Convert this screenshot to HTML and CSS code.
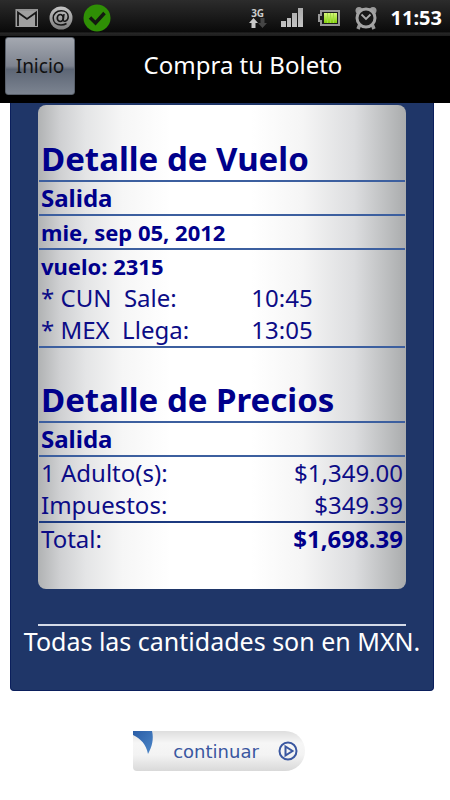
FILE: index.html
```html
<!DOCTYPE html>
<html lang="es">
<head>
  <meta charset="UTF-8">
  <meta name="viewport" content="width=device-width, initial-scale=1.0">
  <title>Compra tu Boleto</title>
  <link rel="stylesheet" href="styles.css">
</head>
<body>
  <div class="status-bar">
    <div class="status-left">
      <svg width="24" height="20" viewBox="0 0 24 20">
        <rect x="0.500" y="1" width="22.500" height="18" fill="#a0a0a0"/>
        <path d="M3 18V4.500l9 6.500 9-6.500V18" fill="none" stroke="#161616" stroke-width="1.800"/>
        <path d="M1 2h22" stroke="#8a8a8a" stroke-width="1"/>
      </svg>
      <svg width="24" height="24" viewBox="0 0 24 24">
        <defs>
          <linearGradient id="ball" x1="0" y1="0" x2="0" y2="1">
            <stop offset="0" stop-color="#c4c4c4"/>
            <stop offset="1" stop-color="#7d7d7d"/>
          </linearGradient>
        </defs>
        <circle cx="12" cy="12" r="11.500" fill="url(#ball)"/>
        <ellipse cx="11.300" cy="12" rx="3" ry="3.500" fill="none" stroke="#161616" stroke-width="1.700"/>
        <path d="M15 8l-.8 6c0 2.300 5 1.500 5-3.200 0-3.800-3-6-7-6-4.700 0-8 3-8 7.200s3.200 7 7.800 7c2.200 0 3.800-.4 5.500-1.500" fill="none" stroke="#161616" stroke-width="1.500"/>
      </svg>
      <svg width="28" height="28" viewBox="0 0 28 28">
        <circle cx="14" cy="14" r="13.500" fill="#2f8f05"/>
        <path d="M7 13.500l5.500 5.500 9-10" fill="none" stroke="#131a10" stroke-width="3.500"/>
      </svg>
    </div>
    <div class="status-right">
      <div class="network">
        <span>3G</span>
        <svg width="18" height="10" viewBox="0 0 18 10">
          <path d="M4.500 0l4.500 5H6.500v5h-4V5H0z" fill="#c8c8c8"/>
          <path d="M13.500 10l4.500-5h-2.500V0h-4v5H9z" fill="#454545"/>
        </svg>
      </div>
      <svg width="24" height="20" viewBox="0 0 24 20">
        <defs>
          <linearGradient id="bars" x1="0" y1="0" x2="0" y2="1">
            <stop offset="0" stop-color="#aaa"/>
            <stop offset="1" stop-color="#c4c4c4"/>
          </linearGradient>
        </defs>
        <path d="M1 13h5v6H1zM7 10h4v9H7zM12 5h5v14h-5zM18 0h5v19h-5z" fill="url(#bars)"/>
      </svg>
      <svg width="24" height="18" viewBox="0 0 24 18">
        <defs>
          <linearGradient id="charge" x1="0" y1="0" x2="0" y2="1">
            <stop offset="0" stop-color="#d9f77e"/>
            <stop offset="1" stop-color="#80d00a"/>
          </linearGradient>
        </defs>
        <path d="M4 2h18v14H4v-4H2V6h2z" fill="#1c1c1c" stroke="#999" stroke-width="2"/>
        <rect x="7" y="4" width="13" height="10" fill="url(#charge)"/>
        <path d="M10.500 4v10M13.500 4v10M16.500 4v10" stroke="#a4dc46" stroke-width="1"/>
      </svg>
      <svg width="24" height="24" viewBox="0 0 24 24">
        <circle cx="5" cy="4.500" r="3.500" fill="#999"/>
        <circle cx="19" cy="4.500" r="3.500" fill="#999"/>
        <path d="M6 18l-2 5M18 18l2 5" stroke="#999" stroke-width="3.500"/>
        <circle cx="12" cy="12" r="9" fill="#181818" stroke="#a4a4a4" stroke-width="3"/>
        <path d="M7.500 8.500l4.500 4.500 4.500-4.500" fill="none" stroke="#aaa" stroke-width="1.800"/>
      </svg>
      <span class="clock">11:53</span>
    </div>
  </div>

  <header class="nav-bar">
    <button class="home-button" type="button">Inicio</button>
    <h1>Compra tu Boleto</h1>
  </header>

  <main>
    <div class="panel">
      <div class="card">
        <section>
          <h2>Detalle de Vuelo</h2>
          <h3>Salida</h3>
          <h4>mie, sep 05, 2012</h4>
          <div class="group">
            <h4 class="plain">vuelo: 2315</h4>
            <table class="flight">
              <tr><th scope="row">* CUN&nbsp; Sale:</th><td>10:45</td></tr>
              <tr><th scope="row">* MEX&nbsp; Llega:</th><td>13:05</td></tr>
            </table>
          </div>
        </section>
        <section>
          <h2>Detalle de Precios</h2>
          <h3>Salida</h3>
          <table class="prices">
            <tbody>
              <tr><th scope="row">1 Adulto(s):</th><td>$1,349.00</td></tr>
              <tr><th scope="row">Impuestos:</th><td>$349.39</td></tr>
            </tbody>
            <tfoot>
              <tr><th scope="row">Total:</th><td>$1,698.39</td></tr>
            </tfoot>
          </table>
        </section>
      </div>
      <p class="note">Todas las cantidades son en MXN.</p>
    </div>

    <div class="actions">
      <button class="continue-button" type="button">
        <svg class="corner" width="21" height="24" viewBox="0 0 21 24">
          <defs>
            <linearGradient id="fold" x1="0" y1="0" x2="1" y2="1">
              <stop offset="0" stop-color="#2a5da6"/>
              <stop offset="1" stop-color="#4c86c8"/>
            </linearGradient>
          </defs>
          <path d="M0 0h19c2 8 0 16-4 23C13 13 8 8 0 4z" fill="url(#fold)"/>
        </svg>
        <span>continuar</span>
        <svg width="20" height="20" viewBox="0 0 20 20">
          <circle cx="10" cy="10" r="8.500" fill="none" stroke="#3a57a0" stroke-width="2"/>
          <path d="M7.500 5.500v9l7-4.500z" fill="none" stroke="#3a57a0" stroke-width="2"/>
        </svg>
      </button>
    </div>
  </main>
</body>
</html>
```
FILE: styles.css
```css
* {
  margin: 0;
  padding: 0;
  box-sizing: border-box;
}

body {
  font-family: 'Noto Sans', 'Open Sans', sans-serif;
  font-size: 25px;
  line-height: 32px;
  background: white;
  color: #0c0c86;
}

svg {
  display: block;
  flex-shrink: 0;
}

button {
  font-family: inherit;
  cursor: pointer;
}

.status-bar {
  display: flex;
  align-items: center;
  justify-content: space-between;
  height: 36px;
  padding: 0 8px 0 15px;
  background: linear-gradient(#2c2c2c, #0a0a0a 88%, #262626 92%, #1c1c1c);
}

.status-left {
  display: flex;
  align-items: center;
  gap: 10px;
}

.status-right {
  display: flex;
  align-items: center;
  gap: 13px;
}

.network {
  display: flex;
  flex-direction: column;
  align-items: center;
  color: #ccc;
  font-size: 10px;
  font-weight: 700;
  line-height: 10px;
}

.clock {
  color: white;
  font-size: 20px;
  font-weight: 700;
}

.nav-bar {
  display: grid;
  grid-template-columns: 70px 1fr 34px;
  align-items: start;
  height: 67px;
  padding: 1px 5px;
  background: black;
}

.nav-bar h1 {
  padding-top: 12px;
  color: white;
  font-size: 24px;
  font-weight: 400;
  text-align: center;
}

.home-button {
  height: 58px;
  border: 1px solid #59606b;
  border-radius: 3px;
  background: linear-gradient(#a4a8b0, #7d838f 50%, #5d6675 56%, #7c8491);
  color: #111;
  font-size: 19px;
}

.panel {
  margin: 0 16px 0 10px;
  padding: 2px 0 34px;
  border: 1px solid #0b1f5c;
  border-top: 0;
  border-radius: 0 0 4px 4px;
  background: #1f3668;
}

.card {
  margin: 0 27px;
  padding: 2px 1px 34px;
  border-radius: 8px;
  background: linear-gradient(90deg, #b0b2b3, #cfd0d2 6%, #e4e5e6 13%, #f6f6f6 23%, white 36%, white 58%, #f5f5f5 72%, #dcdddf 86%, #aaacad);
}

.card h2 {
  padding: 30px 2px 0;
  border-bottom: 2px solid #3c5f9f;
  font-size: 33px;
  line-height: 43px;
  color: #00008b;
}

.card h3,
.card h4 {
  padding: 0 2px;
  border-bottom: 2px solid #3c5f9f;
  color: #00008b;
}

.card h3 {
  font-size: 24px;
}

.card h4 {
  font-size: 22px;
}

.card .plain {
  border-bottom: 0;
}

.group {
  border-bottom: 2px solid #3c5f9f;
}

table {
  width: 100%;
  border-collapse: collapse;
  font-size: 24px;
  line-height: 32px;
}

th {
  padding-left: 2px;
  font-weight: 400;
  text-align: left;
}

.flight th {
  width: 58%;
}

.prices td {
  padding-right: 2px;
  text-align: right;
}

.prices tfoot {
  border-top: 2px solid #1c3a80;
}

.prices tfoot td {
  color: #00008b;
  font-weight: 700;
}

.note {
  margin: 35px 0 0;
  color: white;
  line-height: 30px;
  text-align: center;
}

.note::before {
  content: '';
  display: block;
  margin: 0 27px;
  border-top: 2px solid #d5dbe8;
}

.actions {
  display: flex;
  justify-content: center;
  padding: 40px 12px 0 0;
}

.continue-button {
  display: flex;
  align-items: center;
  justify-content: space-between;
  width: 172px;
  height: 40px;
  padding-right: 7px;
  border: 0;
  border-radius: 0 20px 20px 4px;
  background: linear-gradient(#dedede, #f6f6f6 30%, #f3f3f3 60%, #d9d9d9);
  color: #3a57a0;
  font-family: 'DejaVu Sans', sans-serif;
  font-size: 18px;
}

.corner {
  align-self: flex-start;
}
```
